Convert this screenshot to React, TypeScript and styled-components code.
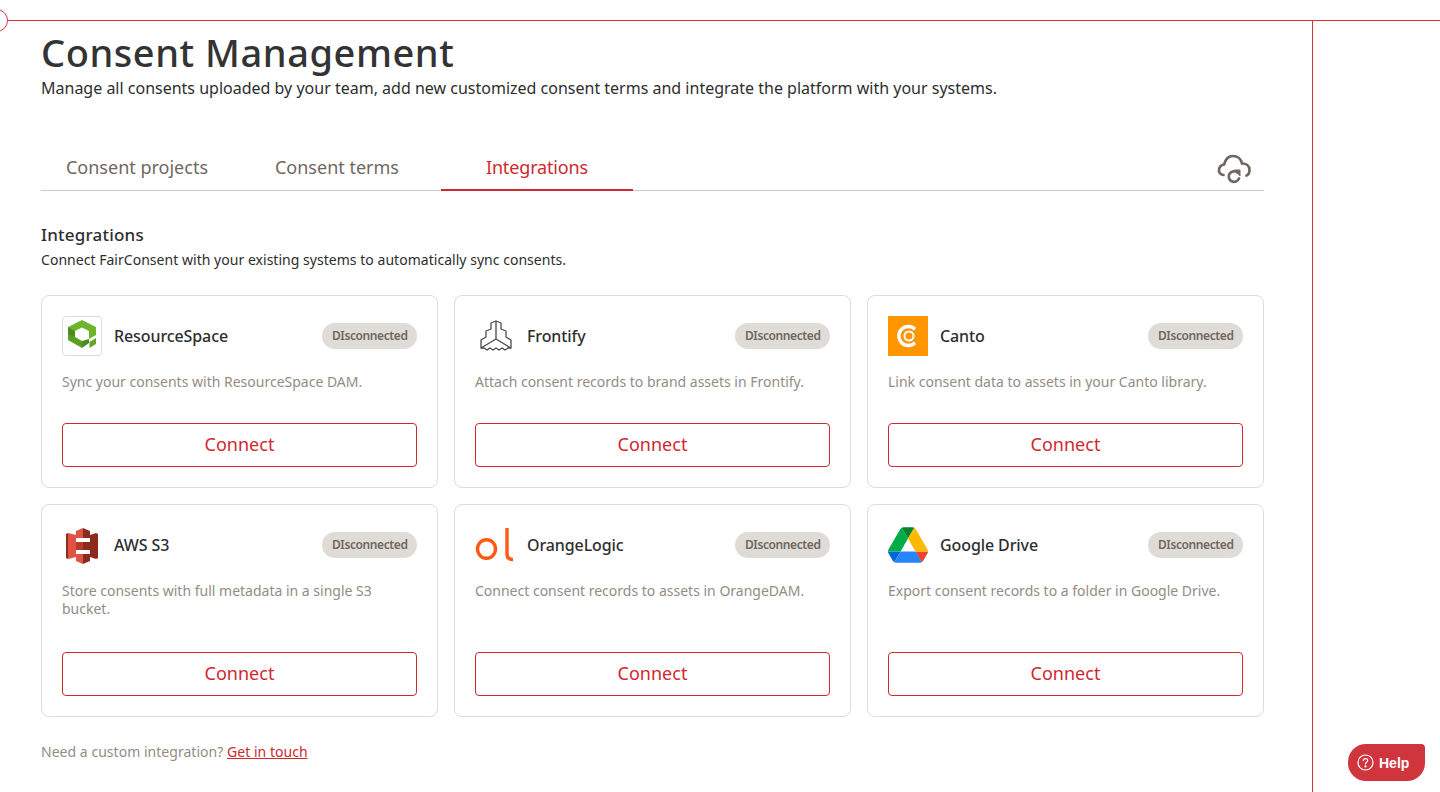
import React from "react";
import styled, { createGlobalStyle } from "styled-components";

const GlobalStyle = createGlobalStyle`
  html, body {
    margin: 0;
    padding: 0;
    height: 100%;
    background: #fff;
    overflow: hidden;
  }
  body {
    font-family: "Noto Sans", "Liberation Sans", sans-serif;
    color: #2e2e2e;
  }
`;

const Page = styled.div`
  position: relative;
  width: 1440px;
  height: 792px;
  overflow: hidden;
`;

const TopLine = styled.div`
  position: absolute;
  left: 0;
  right: 0;
  top: 20px;
  height: 1px;
  background: #d9303a;
`;

const SideLine = styled.div`
  position: absolute;
  left: 1312px;
  top: 20px;
  bottom: 0;
  width: 1px;
  background: #d9303a;
`;

const Corner = styled.div`
  position: absolute;
  left: -15px;
  top: 9px;
  width: 21px;
  height: 21px;
  border: 1px solid #d9303a;
  border-radius: 50%;
  background: #fff;
`;

const Main = styled.main`
  width: 1223px;
  margin-left: 41px;
  padding-top: 30px;
`;

const Title = styled.h1`
  margin: -1px 0 0;
  font-size: 38px;
  line-height: 46px;
  font-weight: 500;
  letter-spacing: 0.55px;
  color: #333;
`;

const Subtitle = styled.p`
  margin: 2px 0 0;
  font-size: 16px;
  line-height: 22px;
  color: #2e2e2e;
`;

const TabBar = styled.div`
  display: flex;
  align-items: stretch;
  justify-content: space-between;
  height: 44px;
  margin-top: 47px;
  border-bottom: 1px solid #cdcbc8;
`;

const Tabs = styled.div`
  display: flex;
`;

const Tab = styled.div<{ $active?: boolean; $width: number }>`
  display: flex;
  align-items: center;
  justify-content: center;
  box-sizing: border-box;
  width: ${({ $width }) => $width}px;
  margin-bottom: -1px;
  padding-bottom: 2px;
  font-size: 18px;
  letter-spacing: ${({ $active }) => ($active ? "-0.15px" : "0")};
  color: ${({ $active }) => ($active ? "#d0282f" : "#6f675f")};
  border-bottom: 2px solid ${({ $active }) => ($active ? "#d0282f" : "transparent")};
`;

const SyncIcon = styled.div`
  display: flex;
  align-items: center;
  padding-right: 6px;
  svg {
    display: block;
  }
`;

const SectionTitle = styled.h2`
  margin: 33px 0 0;
  font-size: 17px;
  line-height: 22px;
  font-weight: 500;
  letter-spacing: 0.2px;
  color: #2e2e2e;
`;

const SectionText = styled.p`
  margin: 4px 0 0;
  font-size: 14px;
  line-height: 20px;
  letter-spacing: 0.03px;
  color: #2e2e2e;
`;

const Grid = styled.div`
  display: grid;
  grid-template-columns: repeat(3, 1fr);
  grid-template-rows: 193px 213px;
  gap: 16px;
  margin-top: 25px;
`;

const Card = styled.section`
  display: flex;
  flex-direction: column;
  box-sizing: border-box;
  padding: 20px;
  border: 1px solid #dedcd9;
  border-radius: 8px;
`;

const CardHead = styled.div`
  display: flex;
  align-items: center;
  height: 40px;
`;

const Logo = styled.div<{ $framed?: boolean }>`
  display: flex;
  align-items: center;
  justify-content: center;
  box-sizing: border-box;
  width: 40px;
  height: 40px;
  flex: none;
  border-radius: ${({ $framed }) => ($framed ? "4px" : "0")};
  border: ${({ $framed }) => ($framed ? "1px solid #dedcd9" : "none")};
  svg {
    display: block;
  }
`;

const CardName = styled.div`
  flex: 1;
  margin-left: 12px;
  font-size: 16px;
  font-weight: 500;
  letter-spacing: -0.1px;
  color: #2e2e2e;
`;

const Badge = styled.span`
  display: flex;
  align-items: center;
  box-sizing: border-box;
  height: 26px;
  padding: 0 9.5px 1px;
  border-radius: 13px;
  background: #dfdcd8;
  font-size: 12px;
  font-weight: 600;
  letter-spacing: -0.4px;
  color: #6f675f;
`;

const CardText = styled.p`
  margin: 17px 0 0;
  font-size: 14px;
  line-height: 18px;
  color: #948c84;
`;

const ConnectButton = styled.button`
  display: block;
  flex: none;
  width: 100%;
  height: 44px;
  margin-top: auto;
  padding: 0 0 2px;
  background: #fff;
  border: 1px solid #d0282f;
  border-radius: 4px;
  font-family: inherit;
  font-size: 18px;
  color: #d0282f;
`;

const Footer = styled.p`
  margin: 25px 0 0;
  font-size: 14px;
  line-height: 20px;
  letter-spacing: 0.03px;
  color: #948c84;
  a {
    color: #d0282f;
    text-decoration: underline;
  }
`;

const HelpButton = styled.button`
  position: absolute;
  left: 1348px;
  top: 744px;
  display: flex;
  align-items: center;
  gap: 5px;
  width: 77px;
  height: 37px;
  padding: 0 0 0 9px;
  box-sizing: border-box;
  border: none;
  border-radius: 18px 4px 18px 18px;
  background: #d0343c;
  color: #fff;
  font-family: "Liberation Sans", sans-serif;
  font-size: 14px;
  font-weight: 700;
`;

const ResourceSpaceLogo = () => (
  <svg width="38" height="38" viewBox="3 3 38 38">
    <path d="M22 6 L36 13 L36 21 L29 25 L29 17 L22 13.500 L15 17 L8 13 Z" fill="#6fb52c" />
    <path d="M8 13 L15 17 L15 23 L22 27 L22 34 L15 30 L8 26 Z" fill="#5a9e22" />
    <path d="M8 13 L15 17 L15 23 L8 20 Z" fill="#4d8c1a" />
    <path d="M22 27 L29 25 L29 29 L22 34 Z" fill="#4d8c1a" />
    <path d="M29.500 28 L36 24 L36 30 L29.500 34 Z" fill="#63a826" />
  </svg>
);

const FrontifyLogo = () => (
  <svg width="40" height="40" viewBox="1 0 40 40" fill="none" stroke="#4a4a4a" strokeWidth="1.300" strokeLinejoin="round">
    <path d="M22 5 L17 7 L17 13 L12 15 L12 21 L7 24 L7 32 L10 32 L13 34 L16 32 L19 34 L22 32 L25 34 L28 32 L31 34 L34 32 L37 32 L37 24 L32 21 L32 15 L27 13 L27 7 Z" />
    <path d="M22 5 L22 23 M22 23 L7 32 M22 23 L37 32" />
  </svg>
);

const CantoLogo = () => (
  <svg width="40" height="40" viewBox="0 0 40 40">
    <rect width="40" height="40" fill="#ff9500" />
    <path d="M27 13.200 A9.500 9.500 0 1 0 27 26.800" fill="none" stroke="#fff" strokeWidth="3.400" />
    <circle cx="21" cy="20" r="4.500" fill="none" stroke="#fff" strokeWidth="2" />
  </svg>
);

const AwsLogo = () => (
  <svg width="40" height="40" viewBox="0 0 40 40">
    <path d="M4 9 L6 8 L6 34 L4 33 Z" fill="#8c2a1c" />
    <path d="M6 8 L14 10 L14 32 L6 34 Z" fill="#e05243" />
    <path d="M36 9 L34 8 L34 34 L36 33 Z" fill="#8c2a1c" />
    <path d="M34 8 L28 10 L28 32 L34 34 Z" fill="#8c2a1c" />
    <path d="M14 6 L21 3 L21 13 L14 13 Z" fill="#e05243" />
    <path d="M28 6 L21 3 L21 13 L28 13 Z" fill="#8c2a1c" />
    <path d="M14 29 L21 29 L21 39 L14 36 Z" fill="#e05243" />
    <path d="M28 29 L21 29 L21 39 L28 36 Z" fill="#8c2a1c" />
    <path d="M14 17 L21 17 L21 25 L14 25 Z" fill="#b8392b" />
    <path d="M28 17 L21 17 L21 25 L28 25 Z" fill="#8c2a1c" />
  </svg>
);

const OrangeLogicLogo = () => (
  <svg width="40" height="40" viewBox="0 0 40 40" fill="none" stroke="#ff5a12" strokeWidth="3.400">
    <ellipse cx="11.500" cy="24" rx="9" ry="9.300" />
    <path d="M32 3 L32 29 Q32 34.500 38 34.500" />
  </svg>
);

const DriveLogo = () => (
  <svg width="40" height="36" viewBox="0 0 87.3 78">
    <path d="m6.600 66.850 3.850 6.650c.8 1.400 1.950 2.500 3.300 3.300l13.750-23.800h-27.500c0 1.550.4 3.100 1.200 4.500z" fill="#0066da" />
    <path d="m43.650 25-13.750-23.800c-1.350.8-2.500 1.900-3.300 3.300l-25.400 44a9.060 9.060 0 0 0 -1.200 4.500h27.500z" fill="#00ac47" />
    <path d="m73.550 76.800c1.350-.8 2.500-1.900 3.300-3.300l1.600-2.750 7.650-13.250c.8-1.400 1.200-2.950 1.200-4.500h-27.502l5.852 11.500z" fill="#ea4335" />
    <path d="m43.650 25 13.750-23.800c-1.350-.8-2.900-1.200-4.500-1.200h-18.500c-1.600 0-3.150.45-4.500 1.200z" fill="#00832d" />
    <path d="m59.800 53h-32.300l-13.750 23.800c1.350.8 2.900 1.200 4.500 1.200h50.800c1.600 0 3.150-.45 4.500-1.200z" fill="#2684fc" />
    <path d="m73.400 26.500-12.700-22c-.8-1.400-1.950-2.500-3.300-3.300l-13.750 23.800 16.150 28h27.450c0-1.550-.4-3.100-1.200-4.500z" fill="#ffba00" />
  </svg>
);

const CloudSync = () => (
  <svg width="48" height="36" viewBox="0 0 48 36" fill="none" stroke="#6f675f" strokeWidth="2.700" strokeLinecap="round">
    <path d="M13.500 25 C10 24.500 8.500 22 9 19.500 C9.500 16.500 11.500 15 14 14.500 C15.500 9 18.500 6 23 6 C27.500 6 31 9 32 13.500 C36 13.500 39.500 15.500 39.500 20 C39.500 23 38 25 36.500 25.500" />
    <path d="M27.500 22.500 A5.300 5.300 0 1 0 29 28.500" />
    <path d="M24.800 20 L30 20 L30 25.500 Z" fill="#6f675f" strokeWidth="1" strokeLinejoin="round" />
  </svg>
);

const HelpIcon = () => (
  <svg width="17" height="17" viewBox="0 0 17 17" fill="none" stroke="#fff" strokeWidth="1.200">
    <circle cx="8.500" cy="8.500" r="7.500" />
    <path d="M6.300 6.600 C6.300 3.900 10.700 3.900 10.700 6.600 C10.700 8.300 8.500 8.200 8.500 10" strokeLinecap="round" />
    <circle cx="8.500" cy="12.400" r="0.500" />
  </svg>
);

interface Integration {
  name: string;
  text: string;
  logo: React.ReactNode;
  framed?: boolean;
}

const integrations: Integration[] = [
  { name: "ResourceSpace", text: "Sync your consents with ResourceSpace DAM.", logo: <ResourceSpaceLogo />, framed: true },
  { name: "Frontify", text: "Attach consent records to brand assets in Frontify.", logo: <FrontifyLogo /> },
  { name: "Canto", text: "Link consent data to assets in your Canto library.", logo: <CantoLogo /> },
  { name: "AWS S3", text: "Store consents with full metadata in a single S3 bucket.", logo: <AwsLogo /> },
  { name: "OrangeLogic", text: "Connect consent records to assets in OrangeDAM.", logo: <OrangeLogicLogo /> },
  { name: "Google Drive", text: "Export consent records to a folder in Google Drive.", logo: <DriveLogo /> },
];

const App = () => (
  <Page>
    <GlobalStyle />
    <TopLine />
    <SideLine />
    <Corner />
    <Main>
      <Title>Consent Management</Title>
      <Subtitle>
        Manage all consents uploaded by your team, add new customized consent terms and integrate the platform with your systems.
      </Subtitle>
      <TabBar>
        <Tabs>
          <Tab $width={192}>Consent projects</Tab>
          <Tab $width={208}>Consent terms</Tab>
          <Tab $width={192} $active>
            Integrations
          </Tab>
        </Tabs>
        <SyncIcon>
          <CloudSync />
        </SyncIcon>
      </TabBar>
      <SectionTitle>Integrations</SectionTitle>
      <SectionText>Connect FairConsent with your existing systems to automatically sync consents.</SectionText>
      <Grid>
        {integrations.map(({ name, text, logo, framed }) => (
          <Card key={name}>
            <CardHead>
              <Logo $framed={framed}>{logo}</Logo>
              <CardName>{name}</CardName>
              <Badge>DIsconnected</Badge>
            </CardHead>
            <CardText>{text}</CardText>
            <ConnectButton>Connect</ConnectButton>
          </Card>
        ))}
      </Grid>
      <Footer>
        Need a custom integration? <a href="#touch">Get in touch</a>
      </Footer>
    </Main>
    <HelpButton>
      <HelpIcon />
      Help
    </HelpButton>
  </Page>
);

export default App;
